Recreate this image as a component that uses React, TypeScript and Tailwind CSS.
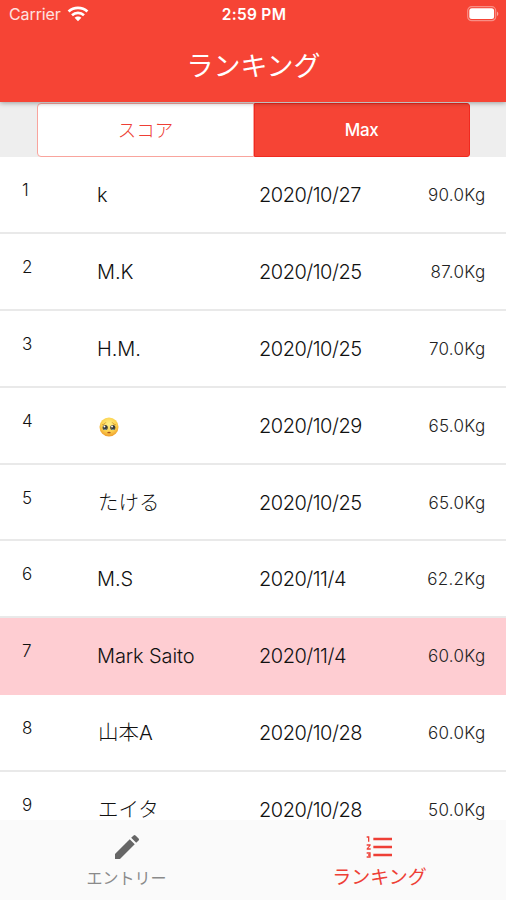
import { useState } from "react";

import clsx from "clsx";
import { MdEdit, MdFormatListNumbered } from "react-icons/md";

type Entry = {
  rank: number;
  name: string;
  date: string;
  weight: string;
  isMe?: boolean;
};

const entries: Entry[] = [
  { rank: 1, name: "k", date: "2020/10/27", weight: "90.0Kg" },
  { rank: 2, name: "M.K", date: "2020/10/25", weight: "87.0Kg" },
  { rank: 3, name: "H.M.", date: "2020/10/25", weight: "70.0Kg" },
  { rank: 4, name: "🥺", date: "2020/10/29", weight: "65.0Kg" },
  { rank: 5, name: "たける", date: "2020/10/25", weight: "65.0Kg" },
  { rank: 6, name: "M.S", date: "2020/11/4", weight: "62.2Kg" },
  { rank: 7, name: "Mark Saito", date: "2020/11/4", weight: "60.0Kg", isMe: true },
  { rank: 8, name: "山本A", date: "2020/10/28", weight: "60.0Kg" },
  { rank: 9, name: "エイタ", date: "2020/10/28", weight: "50.0Kg" },
];

const isLatin = (text: string) => /^[\x20-\x7e]+$/.test(text);

const WifiIcon = () => (
  <svg width="22" height="16" viewBox="0 0 22 16" fill="none" stroke="white">
    <path d="M1.6 5.6C6.8.7 15.2.7 20.4 5.6" strokeWidth="2.8" />
    <path d="M5 9.3c3.4-3.2 8.6-3.2 12 0" strokeWidth="2.6" />
    <path d="M7.6 11.8 11 15.3l3.4-3.5c-1.9-1.8-4.9-1.8-6.8 0z" fill="white" stroke="none" />
  </svg>
);

const BatteryIcon = () => (
  <svg width="33" height="16" viewBox="0 0 33 16">
    <rect x="1.7" y="0.7" width="28" height="14" rx="4" fill="none" stroke="white" strokeOpacity="0.4" strokeWidth="1.2" />
    <rect x="3.3" y="2.3" width="24.8" height="10.8" rx="2.5" fill="white" />
    <path d="M31 5.4c1.8.8 1.8 3.8 0 4.6z" fill="white" fillOpacity="0.5" />
  </svg>
);

const PleadingFace = () => (
  <svg width="20" height="20" viewBox="0 0 21 21" className="mt-[3px] ml-px">
    <defs>
      <radialGradient id="face" cx="0.5" cy="0.35" r="0.65">
        <stop offset="0" stopColor="#fff08a" />
        <stop offset="0.6" stopColor="#fcd24e" />
        <stop offset="1" stopColor="#ee9c2c" />
      </radialGradient>
    </defs>
    <circle cx="10.5" cy="10.5" r="10" fill="url(#face)" />
    <path d="M3.3 8.2c1.7-.3 3-1.2 3.8-2.5M17.7 8.2c-1.7-.3-3-1.2-3.8-2.5" fill="none" stroke="#c58a2c" strokeWidth="0.9" />
    <circle cx="6.5" cy="11" r="2.7" fill="#3b3b35" />
    <circle cx="14.5" cy="11" r="2.7" fill="#3b3b35" />
    <circle cx="5.7" cy="10" r="1" fill="#fff" />
    <circle cx="13.7" cy="10" r="1" fill="#fff" />
    <path d="M5 12.6c1 .8 2 .8 3 0M13 12.6c1 .8 2 .8 3 0" fill="none" stroke="#8fb6c6" strokeWidth="0.9" />
    <path d="M9 16.8c.8-.9 2.2-.9 3 0" fill="none" stroke="#a5501c" strokeWidth="1.2" />
  </svg>
);

const RankingRow = ({ entry }: { entry: Entry }) => (
  <li
    className={clsx(
      "flex h-[76.9px] border-b-2 font-light text-[#111]",
      entry.isMe ? "border-[#fecdd2] bg-[#fecdd2]" : "border-[#e9e9e9] bg-white",
    )}
  >
    <span className="w-[97px] pt-[21px] pl-[22px] text-[17px] leading-6">
      {entry.rank}
    </span>
    <span
      className={clsx(
        "flex w-[162px] items-center pt-px leading-5",
        isLatin(entry.name) ? "text-[20px] tracking-[-0.1px]" : "pl-px text-[20.5px]",
      )}
    >
      {entry.name === "🥺" ? <PleadingFace /> : entry.name}
    </span>
    <span className="flex flex-1 items-center pt-px text-[20px] leading-5 tracking-[-0.5px]">
      {entry.date}
    </span>
    <span className="flex items-center pt-px pr-[20.5px] text-[17px] leading-5 tracking-[0.3px] text-[#222]">
      {entry.weight}
    </span>
  </li>
);

export default function App() {
  const [tab, setTab] = useState<"score" | "max">("max");

  return (
    <div className="flex h-[900px] w-[506px] flex-col overflow-hidden bg-white font-['Inter','Noto_Sans_CJK_JP',sans-serif]">
      <header className="relative z-10 h-[102px] shrink-0 bg-[#f64435] text-white shadow-[0_1px_5px_rgba(0,0,0,0.35)]">
        <div className="grid h-7 grid-cols-3 items-center pr-[7px] pl-[9px]">
          <div className="flex items-center gap-[6px] text-[16px] tracking-[-0.1px] text-white/85">
            Carrier
            <WifiIcon />
          </div>
          <div className="pt-[2px] text-center text-[15.5px] font-semibold tracking-[0.3px]">
            2:59 PM
          </div>
          <div className="flex justify-end">
            <BatteryIcon />
          </div>
        </div>
        <h1 className="pt-[19px] pl-px text-center text-[27px] leading-10">ランキング</h1>
      </header>

      <div className="flex h-[55px] shrink-0 justify-center bg-[#eeeeee]">
        <div className="flex w-[433px] pt-px text-lg">
          <button
            className={clsx(
              "flex-1 rounded-l border",
              tab === "score"
                ? "border-[#f02a20] bg-[#f64435] text-white"
                : "border-[#f9a49d] bg-white pt-px pl-px text-[18.5px] font-light text-[#ee3f36]",
            )}
            onClick={() => setTab("score")}
          >
            スコア
          </button>
          <button
            className={clsx(
              "flex-1 rounded-r-[3px] border",
              tab === "max"
                ? "border-[#f02a20] bg-[#f64435] text-[17px] font-medium tracking-[-0.4px] text-white"
                : "border-[#f9a49d] bg-white text-[#f05048]",
            )}
            onClick={() => setTab("max")}
          >
            Max
          </button>
        </div>
      </div>

      <ul className="min-h-0 flex-1 overflow-hidden">
        {entries.map((entry) => (
          <RankingRow key={entry.rank} entry={entry} />
        ))}
      </ul>

      <nav className="grid h-20 shrink-0 grid-cols-2 bg-[#fafafa]">
        <button className="flex flex-col items-center pt-[11px] text-[#8a8a8a]">
          <MdEdit size={32} className="text-[#666]" />
          <span className="text-base leading-[31px]">エントリー</span>
        </button>
        <button className="flex flex-col items-center pt-[11px] text-[#ee3f36]">
          <MdFormatListNumbered size={32} />
          <span className="pt-px text-[19px] leading-7">ランキング</span>
        </button>
      </nav>
    </div>
  );
}
